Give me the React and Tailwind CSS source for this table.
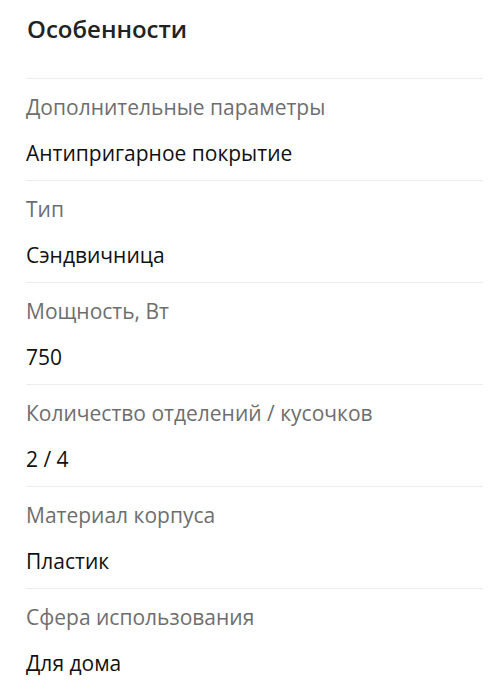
const specs = [
  { label: "Дополнительные параметры", value: "Антипригарное покрытие" },
  { label: "Тип", value: "Сэндвичница" },
  { label: "Мощность, Вт", value: "750" },
  { label: "Количество отделений / кусочков", value: "2 / 4" },
  { label: "Материал корпуса", value: "Пластик" },
  { label: "Сфера использования", value: "Для дома" },
];

export default function App() {
  return (
    <div className="min-h-screen bg-white pl-[26px] pr-[19px] font-['Open_Sans',sans-serif]">
      <h2 className="pt-[14px] pl-[1px] text-[24px] leading-[30px] font-semibold text-[#222] mb-[34px]">Особенности</h2>
      <div>
        {specs.map((s) => (
          <div key={s.label} className="border-t border-[#ececec] pt-[14px] pb-[13px]">
            <div className="text-[21px] leading-[28px] text-[#6e6e6e]">{s.label}</div>
            <div className="mt-[18px] text-[21px] leading-[28px] text-[#111]">{s.value}</div>
          </div>
        ))}
      </div>
    </div>
  );
}
